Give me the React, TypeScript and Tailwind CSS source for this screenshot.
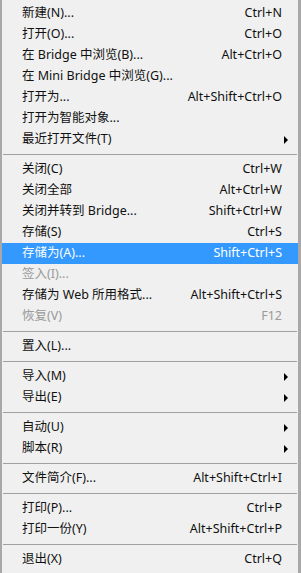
type Item =
  | { sep: true }
  | { label: string; shortcut?: string; sub?: boolean; disabled?: boolean; active?: boolean };

const items: Item[] = [
  { label: "新建(N)...", shortcut: "Ctrl+N" },
  { label: "打开(O)...", shortcut: "Ctrl+O" },
  { label: "在 Bridge 中浏览(B)...", shortcut: "Alt+Ctrl+O" },
  { label: "在 Mini Bridge 中浏览(G)..." },
  { label: "打开为...", shortcut: "Alt+Shift+Ctrl+O" },
  { label: "打开为智能对象..." },
  { label: "最近打开文件(T)", sub: true },
  { sep: true },
  { label: "关闭(C)", shortcut: "Ctrl+W" },
  { label: "关闭全部", shortcut: "Alt+Ctrl+W" },
  { label: "关闭并转到 Bridge...", shortcut: "Shift+Ctrl+W" },
  { label: "存储(S)", shortcut: "Ctrl+S" },
  { label: "存储为(A)...", shortcut: "Shift+Ctrl+S", active: true },
  { label: "签入(I)...", disabled: true },
  { label: "存储为 Web 所用格式...", shortcut: "Alt+Shift+Ctrl+S" },
  { label: "恢复(V)", shortcut: "F12", disabled: true },
  { sep: true },
  { label: "置入(L)..." },
  { sep: true },
  { label: "导入(M)", sub: true },
  { label: "导出(E)", sub: true },
  { sep: true },
  { label: "自动(U)", sub: true },
  { label: "脚本(R)", sub: true },
  { sep: true },
  { label: "文件简介(F)...", shortcut: "Alt+Shift+Ctrl+I" },
  { sep: true },
  { label: "打印(P)...", shortcut: "Ctrl+P" },
  { label: "打印一份(Y)", shortcut: "Alt+Shift+Ctrl+P" },
  { sep: true },
  { label: "退出(X)", shortcut: "Ctrl+Q" },
];

export default function App() {
  return (
    <div
      className="w-[301px] h-[573px] bg-[#f0f0f0] border-l-2 border-r-[3px] border-[#a8a8a8] pt-[3px] text-[12.5px] overflow-hidden"
      style={{ fontFamily: '"Noto Sans", "Noto Sans CJK SC", sans-serif' }}
    >
      {items.map((it, i) => {
        if ("sep" in it) {
          return (
            <div key={i} className="h-[9px] flex items-center pl-[1px] pr-[1px]">
              <div className="w-full h-px bg-[#a0a0a0]" />
            </div>
          );
        }
        const color = it.active ? "text-white" : it.disabled ? "text-[#9a9a9a]" : "text-[#111]";
        return (
          <div
            key={i}
            className={`h-[21px] flex items-center pl-[20px] pr-[16px] ${it.active ? "bg-[#3399ff]" : ""} ${color}`}
          >
            <span className="flex-1 whitespace-nowrap">{it.label}</span>
            {it.shortcut && <span className="whitespace-nowrap">{it.shortcut}</span>}
            {it.sub && (
              <span className="w-0 h-0 mr-[-6px] border-y-[4px] border-y-transparent border-l-[4px] border-l-black" />
            )}
          </div>
        );
      })}
    </div>
  );
}
